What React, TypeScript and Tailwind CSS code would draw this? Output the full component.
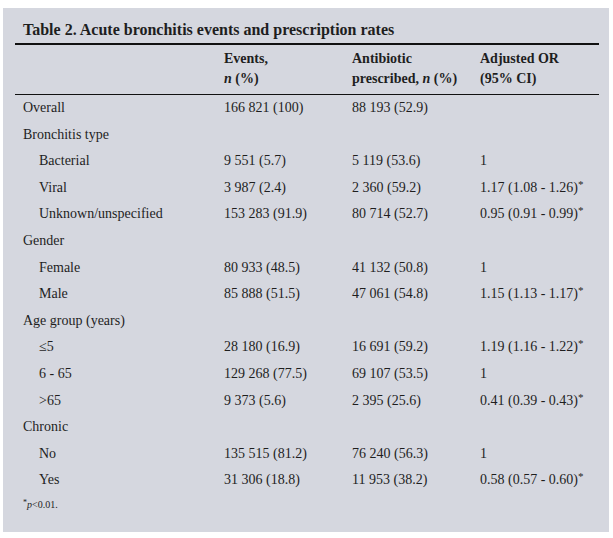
import React from "react";

type Row = { label: string; indent?: boolean; a?: string; b?: string; c?: string; star?: boolean };

const rows: Row[] = [
  { label: "Overall", a: "166 821 (100)", b: "88 193 (52.9)" },
  { label: "Bronchitis type" },
  { label: "Bacterial", indent: true, a: "9 551 (5.7)", b: "5 119 (53.6)", c: "1" },
  { label: "Viral", indent: true, a: "3 987 (2.4)", b: "2 360 (59.2)", c: "1.17 (1.08 - 1.26)", star: true },
  { label: "Unknown/unspecified", indent: true, a: "153 283 (91.9)", b: "80 714 (52.7)", c: "0.95 (0.91 - 0.99)", star: true },
  { label: "Gender" },
  { label: "Female", indent: true, a: "80 933 (48.5)", b: "41 132 (50.8)", c: "1" },
  { label: "Male", indent: true, a: "85 888 (51.5)", b: "47 061 (54.8)", c: "1.15 (1.13 - 1.17)", star: true },
  { label: "Age group (years)" },
  { label: "≤5", indent: true, a: "28 180 (16.9)", b: "16 691 (59.2)", c: "1.19 (1.16 - 1.22)", star: true },
  { label: "6 - 65", indent: true, a: "129 268 (77.5)", b: "69 107 (53.5)", c: "1" },
  { label: ">65", indent: true, a: "9 373 (5.6)", b: "2 395 (25.6)", c: "0.41 (0.39 - 0.43)", star: true },
  { label: "Chronic" },
  { label: "No", indent: true, a: "135 515 (81.2)", b: "76 240 (56.3)", c: "1" },
  { label: "Yes", indent: true, a: "31 306 (18.8)", b: "11 953 (38.2)", c: "0.58 (0.57 - 0.60)", star: true },
];

export default function App() {
  return (
    <div className="w-[613px] h-[538px] bg-white pt-[8px] pl-[3px]" style={{ fontFamily: '"Liberation Serif", serif' }}>
      <div className="w-[606px] h-[524px] bg-[#d5d7df] pl-[12px] pr-[10px] text-[#1e1e1e]">
        <div className="pl-[8px] pt-[12px] pb-[3px] text-[16px] leading-[20px] font-bold">
          Table 2. Acute bronchitis events and prescription rates
        </div>
        <div className="border-t-2 border-[#111]" />
        <div className="grid grid-cols-[209px_128px_128px_1fr] text-[14px] leading-[20px] font-bold pt-[4px] pb-[5px] border-b border-[#111]">
          <div />
          <div>
            Events,
            <br />
            <span className="italic">n</span> (%)
          </div>
          <div>
            Antibiotic
            <br />
            prescribed, <span className="italic">n</span> (%)
          </div>
          <div>
            Adjusted OR
            <br />
            (95% CI)
          </div>
        </div>
        <div className="text-[14px] leading-[26.6px]">
          {rows.map((r, i) => (
            <div key={i} className="grid grid-cols-[209px_128px_128px_1fr] h-[26.6px]">
              <div className={r.indent ? "pl-[24px]" : "pl-[8px]"}>{r.label}</div>
              <div>{r.a}</div>
              <div>{r.b}</div>
              <div>
                {r.c}
                {r.star && <span className="text-[11px] relative top-[-4px]">*</span>}
              </div>
            </div>
          ))}
        </div>
        <div className="pl-[8px] pt-[4px] text-[10px] leading-[14px]">
          <span className="text-[8px] relative top-[-3px]">*</span>
          <span className="italic">p</span>&lt;0.01.
        </div>
      </div>
    </div>
  );
}
